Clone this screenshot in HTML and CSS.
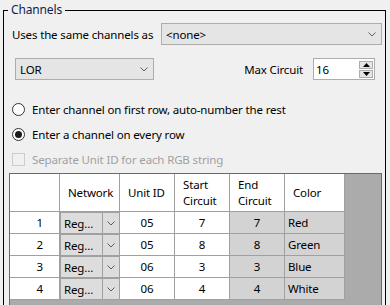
FILE: index.html
```html
<!DOCTYPE html>
<html>
<head>
<meta charset="utf-8">
<link rel="stylesheet" href="styles.css">
</head>
<body>
<fieldset class="group">
  <legend class="group-title">Channels</legend>
  <div class="row row-same">
    <span class="label">Uses the same channels as</span>
    <div class="combo combo-same">
      <span class="combo-text">&lt;none&gt;</span>
      <svg class="chev" width="8" height="5" viewBox="0 0 8 5"><polyline points="0.5,0.5 4,4 7.5,0.5"/></svg>
    </div>
  </div>
  <div class="row row-type">
    <div class="combo combo-lor">
      <span class="combo-text">LOR</span>
      <svg class="chev" width="8" height="5" viewBox="0 0 8 5"><polyline points="0.5,0.5 4,4 7.5,0.5"/></svg>
    </div>
    <span class="label max-label">Max Circuit</span>
    <div class="spin">
      <span class="spin-text">16</span>
      <div class="spin-btns">
        <span class="spin-btn"><svg width="7" height="4" viewBox="0 0 7 4"><polygon points="0,4 3.5,0 7,4"/></svg></span>
        <span class="spin-btn"><svg width="7" height="4" viewBox="0 0 7 4"><polygon points="0,0 3.5,4 7,0"/></svg></span>
      </div>
    </div>
  </div>
  <div class="options">
    <div class="opt"><span class="radio"></span><span>Enter channel on first row, auto-number the rest</span></div>
    <div class="opt"><span class="radio checked"></span><span>Enter a channel on every row</span></div>
    <div class="opt disabled"><span class="check"></span><span>Separate Unit ID for each RGB string</span></div>
  </div>
  <div class="grid">
    <div class="table">
      <div class="cell head"></div>
      <div class="cell head">Network</div>
      <div class="cell head">Unit ID</div>
      <div class="cell head"><span>Start<br>Circuit</span></div>
      <div class="cell head"><span>End<br>Circuit</span></div>
      <div class="cell head">Color</div>

      <div class="cell rowhead">1</div>
      <div class="cell net"><div class="net-combo"><span class="net-text">Reg...</span><span class="net-btn"><svg class="chev" width="8" height="5" viewBox="0 0 8 5"><polyline points="0.5,0.5 4,4 7.5,0.5"/></svg></span></div></div>
      <div class="cell num">05</div>
      <div class="cell num">7</div>
      <div class="cell num ro">7</div>
      <div class="cell color ro">Red</div>

      <div class="cell rowhead">2</div>
      <div class="cell net"><div class="net-combo"><span class="net-text">Reg...</span><span class="net-btn"><svg class="chev" width="8" height="5" viewBox="0 0 8 5"><polyline points="0.5,0.5 4,4 7.5,0.5"/></svg></span></div></div>
      <div class="cell num">05</div>
      <div class="cell num">8</div>
      <div class="cell num ro">8</div>
      <div class="cell color ro">Green</div>

      <div class="cell rowhead">3</div>
      <div class="cell net"><div class="net-combo"><span class="net-text">Reg...</span><span class="net-btn"><svg class="chev" width="8" height="5" viewBox="0 0 8 5"><polyline points="0.5,0.5 4,4 7.5,0.5"/></svg></span></div></div>
      <div class="cell num">06</div>
      <div class="cell num">3</div>
      <div class="cell num ro">3</div>
      <div class="cell color ro">Blue</div>

      <div class="cell rowhead">4</div>
      <div class="cell net"><div class="net-combo"><span class="net-text">Reg...</span><span class="net-btn"><svg class="chev" width="8" height="5" viewBox="0 0 8 5"><polyline points="0.5,0.5 4,4 7.5,0.5"/></svg></span></div></div>
      <div class="cell num">06</div>
      <div class="cell num">4</div>
      <div class="cell num ro">4</div>
      <div class="cell color ro">White</div>
    </div>
  </div>
</fieldset>
</body>
</html>
```

FILE: styles.css
```css
* { box-sizing: border-box; }
html, body { margin: 0; padding: 0; }
body {
  width: 390px;
  height: 305px;
  overflow: hidden;
  background: #f0f0f0;
  font-family: "Segoe UI", "Noto Sans", sans-serif;
  font-size: 11.5px;
  letter-spacing: -0.15px;
  color: #000;
}
.group {
  margin: 2px 0 0 3px;
  width: 383px;
  height: 330px;
  border: 1px solid #000;
  padding: 0;
  min-width: 0;
}
.group-title {
  margin-left: 4px;
  padding: 0 3px;
  line-height: 16px;
  font-size: 12px;
  color: #0d1f50;
}
.row {
  display: flex;
  align-items: center;
  height: 22px;
}
.row-same {
  margin-top: 5px;
  padding-left: 8px;
  padding-right: 3px;
}
.row-type {
  margin-top: 13px;
  padding-left: 11px;
  padding-right: 10px;
}
.label { white-space: nowrap; }
.combo {
  display: flex;
  align-items: center;
  justify-content: space-between;
  height: 22px;
  background: #e5e5e5;
  border: 1px solid #adadad;
  padding: 0 5px 0 4px;
}
.combo-same { margin-left: auto; width: 221px; }
.combo-lor { width: 139px; }
.chev polyline { fill: none; stroke: #5f5f5f; stroke-width: 1; }
.max-label { margin-left: auto; margin-right: 10px; }
.spin {
  display: flex;
  align-items: center;
  justify-content: space-between;
  width: 62px;
  height: 22px;
  background: #fff;
  border: 1px solid #adadad;
  padding-left: 2px;
  padding-right: 1px;
}
.spin-btns {
  display: flex;
  flex-direction: column;
  gap: 1px;
}
.spin-btn {
  display: flex;
  align-items: center;
  justify-content: center;
  width: 14px;
  height: 8px;
  background: #e5e5e5;
  border: 1px solid #adadad;
}
.spin-btn polygon { fill: #000; }
.options {
  margin-top: 17px;
  padding-left: 8px;
}
.opt {
  display: flex;
  align-items: center;
  height: 25px;
  gap: 7px;
  white-space: nowrap;
}
.radio {
  width: 13px;
  height: 13px;
  border: 1px solid #333;
  border-radius: 50%;
  background: #fff;
  display: flex;
  align-items: center;
  justify-content: center;
  flex: none;
}
.radio.checked::after {
  content: "";
  width: 7px;
  height: 7px;
  border-radius: 50%;
  background: #1a1a1a;
}
.check {
  width: 13px;
  height: 13px;
  border: 1px solid #cccccc;
  background: #f0f0f0;
  flex: none;
}
.opt.disabled { color: #a0a0a0; }
.grid {
  margin: 1px 3px 0 5px;
  height: 140px;
  border: 1px solid #696969;
  background: #ababab;
}
.table {
  display: grid;
  grid-template-columns: 50px 60px 55px 55px 55px 60px;
  grid-template-rows: 38px repeat(4, 22px);
  width: max-content;
}
.cell {
  border-right: 1px solid #a0a0a0;
  border-bottom: 1px solid #a0a0a0;
  background: #fff;
  display: flex;
  align-items: center;
  white-space: nowrap;
}
.cell.head {
  padding-left: 8px;
  line-height: 16px;
}
.cell.rowhead {
  justify-content: flex-end;
  padding-right: 16px;
}
.cell.num { justify-content: center; }
.cell.ro { background: #d3d3d3; }
.cell.color { padding-left: 3px; }
.cell.net { padding: 0; align-items: stretch; }
.net-combo {
  flex: 1;
  display: flex;
  background: #dddddd;
  border-left: 1px solid #a0a0a0;
  border-top: 1px solid #a0a0a0;
}
.net-text {
  flex: 1;
  display: flex;
  align-items: center;
  padding-left: 3px;
}
.net-btn {
  width: 17px;
  display: flex;
  align-items: center;
  justify-content: center;
  border-left: 1px solid #a0a0a0;
}
```
